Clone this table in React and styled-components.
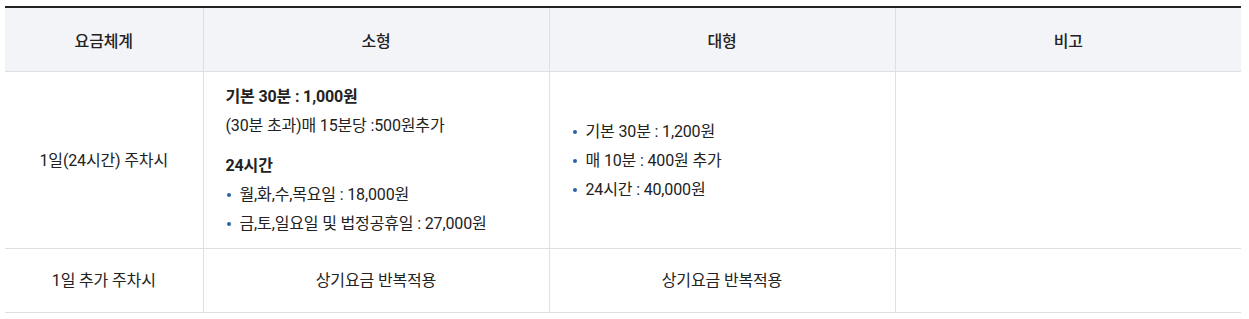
import React from 'react';
import styled, { createGlobalStyle } from 'styled-components';

const GlobalStyle = createGlobalStyle`
  body {
    margin: 0;
    background: #ffffff;
    font-family: "Roboto", "Noto Sans CJK KR", sans-serif;
    color: #222222;
  }
`;

const Wrapper = styled.div`
  padding: 6px 8px 0 5px;
`;

const FeeTable = styled.table`
  width: 1236px;
  border-collapse: collapse;
  table-layout: fixed;
  border-top: 2px solid #222222;
  font-size: 16px;
  letter-spacing: -0.15px;
`;

const HeadCell = styled.th`
  height: 63px;
  padding: 0;
  background: #f3f4f8;
  border-bottom: 1px solid #dedfe3;
  border-left: 1px solid #dedfe3;
  font-weight: 500;
  color: #222222;
  text-align: center;
  &:first-child {
    border-left: none;
  }
`;

const Cell = styled.td`
  height: ${p => p.$height}px;
  padding: ${p => (p.$left ? '0 22px' : '0')};
  border-bottom: 1px solid #dedfe3;
  border-left: 1px solid #dedfe3;
  text-align: ${p => (p.$left ? 'left' : 'center')};
  vertical-align: middle;
  line-height: 29px;
  &:first-child {
    border-left: none;
  }
`;

const Strong = styled.p`
  margin: ${p => (p.$gap ? '11px 0 0' : '0')};
  font-weight: 700;
`;

const Line = styled.p`
  margin: 0;
`;

const Bullets = styled.ul`
  margin: 0;
  padding: 0;
  list-style: none;
`;

const Bullet = styled.li`
  position: relative;
  padding-left: 14px;
  &::before {
    content: '';
    position: absolute;
    left: 1px;
    top: 13px;
    width: 4px;
    height: 4px;
    border-radius: 50%;
    background: #2b64a6;
  }
`;

export default function App() {
  return (
    <Wrapper>
      <GlobalStyle />
      <FeeTable>
        <colgroup>
          <col style={{ width: 198 }} />
          <col style={{ width: 346 }} />
          <col style={{ width: 346 }} />
          <col style={{ width: 346 }} />
        </colgroup>
        <thead>
          <tr>
            <HeadCell>요금체계</HeadCell>
            <HeadCell>소형</HeadCell>
            <HeadCell>대형</HeadCell>
            <HeadCell>비고</HeadCell>
          </tr>
        </thead>
        <tbody>
          <tr>
            <Cell $height={176}>1일(24시간) 주차시</Cell>
            <Cell $height={176} $left>
              <Strong>기본 30분 : 1,000원</Strong>
              <Line>(30분 초과)매 15분당 :500원추가</Line>
              <Strong $gap>24시간</Strong>
              <Bullets>
                <Bullet>월,화,수,목요일 : 18,000원</Bullet>
                <Bullet>금,토,일요일 및 법정공휴일 : 27,000원</Bullet>
              </Bullets>
            </Cell>
            <Cell $height={176} $left>
              <Bullets>
                <Bullet>기본 30분 : 1,200원</Bullet>
                <Bullet>매 10분 : 400원 추가</Bullet>
                <Bullet>24시간 : 40,000원</Bullet>
              </Bullets>
            </Cell>
            <Cell $height={176} />
          </tr>
          <tr>
            <Cell $height={63}>1일 추가 주차시</Cell>
            <Cell $height={63}>상기요금 반복적용</Cell>
            <Cell $height={63}>상기요금 반복적용</Cell>
            <Cell $height={63} />
          </tr>
        </tbody>
      </FeeTable>
    </Wrapper>
  );
}
